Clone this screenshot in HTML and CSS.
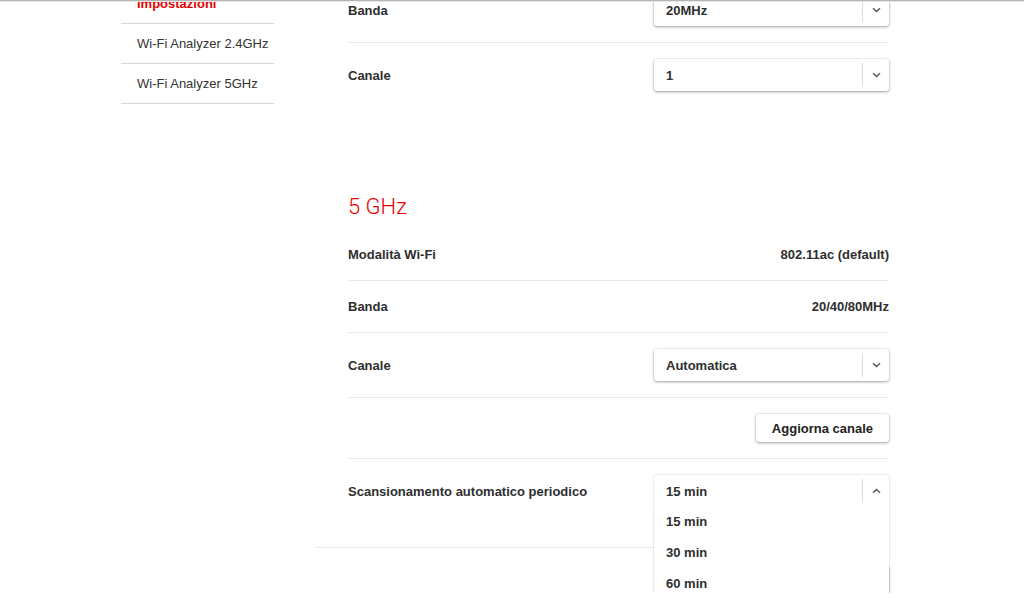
FILE: index.html
```html
<!DOCTYPE html>
<html lang="it">
<head>
<meta charset="utf-8">
<title>Wi-Fi</title>
<link rel="stylesheet" href="styles.css">
</head>
<body>
<div class="topbar"></div>
<div class="page">
  <nav class="sidebar">
    <a class="side-item active">Impostazioni</a>
    <a class="side-item">Wi-Fi Analyzer 2.4GHz</a>
    <a class="side-item">Wi-Fi Analyzer 5GHz</a>
  </nav>
  <main class="main">
    <section class="section">
      <div class="row row-ctl">
        <span class="label">Banda</span>
        <div class="select"><span class="sel-val">20MHz</span><span class="sel-arrow"><svg width="9" height="6" viewBox="0 0 9 6"><path d="M1 1.2l3.5 3.4L8 1.2" fill="none" stroke="#555" stroke-width="1.4"/></svg></span></div>
      </div>
      <div class="row row-ctl last">
        <span class="label">Canale</span>
        <div class="select"><span class="sel-val">1</span><span class="sel-arrow"><svg width="9" height="6" viewBox="0 0 9 6"><path d="M1 1.2l3.5 3.4L8 1.2" fill="none" stroke="#555" stroke-width="1.4"/></svg></span></div>
      </div>
    </section>
    <section class="section s5">
      <h2 class="heading">5 GHz</h2>
      <div class="row row-text">
        <span class="label">Modalità Wi-Fi</span>
        <span class="value">802.11ac (default)</span>
      </div>
      <div class="row row-text">
        <span class="label">Banda</span>
        <span class="value">20/40/80MHz</span>
      </div>
      <div class="row row-ctl">
        <span class="label">Canale</span>
        <div class="select"><span class="sel-val">Automatica</span><span class="sel-arrow"><svg width="9" height="6" viewBox="0 0 9 6"><path d="M1 1.2l3.5 3.4L8 1.2" fill="none" stroke="#555" stroke-width="1.4"/></svg></span></div>
      </div>
      <div class="row row-btn">
        <button class="btn">Aggiorna canale</button>
      </div>
      <div class="row row-ctl last">
        <span class="label">Scansionamento automatico periodico</span>
        <div class="select open"><span class="sel-val">15 min</span><span class="sel-arrow"><svg width="9" height="6" viewBox="0 0 9 6"><path d="M1 4.8l3.5-3.4L8 4.8" fill="none" stroke="#555" stroke-width="1.4"/></svg></span>
          <ul class="menu">
            <li>15 min</li>
            <li>30 min</li>
            <li>60 min</li>
          </ul>
        </div>
      </div>
    </section>
    <div class="footer">
      <button class="btn">Salva</button>
    </div>
  </main>
</div>
</body>
</html>
```
FILE: styles.css
```css
* { box-sizing: border-box; }
html, body { margin: 0; padding: 0; background: #fff; overflow: hidden; }
body {
  font-family: "Liberation Sans", Arial, Helvetica, sans-serif;
  font-size: 13px;
  color: #333;
}
.topbar {
  position: fixed;
  top: 0; left: 0; right: 0;
  height: 2px;
  background: #b4b4b4;
  border-bottom: 1px solid #e8e8e8;
  z-index: 10;
}
.page {
  display: flex;
  gap: 74px;
  padding-left: 121px;
  margin-top: -22px;
}
.sidebar {
  width: 153px;
  flex: none;
  display: flex;
  flex-direction: column;
  margin-top: 6px;
}
.side-item {
  display: block;
  height: 40px;
  line-height: 39px;
  padding-left: 16px;
  border-bottom: 1px solid #d8d8d8;
  color: #333;
  font-size: 13px;
}
.side-item.active { color: #e60000; font-weight: bold; }
.main {
  width: 541px;
  flex: none;
}
.row {
  display: flex;
  align-items: center;
  justify-content: space-between;
  border-bottom: 1px solid #e8e8e8;
}
.row.last { border-bottom: none; }
.row-ctl { height: 65px; padding: 16px 0 16px; }
.row-ctl.last { height: 64px; }
.row-text { height: 52px; }
.row-btn { height: 61px; justify-content: flex-end; }
.label, .value { font-weight: bold; line-height: 19px; color: #2e2e2e; }
.s5 { margin-top: 86px; }
.heading {
  margin: 0 0 8px;
  font-family: Roboto, "Liberation Sans", sans-serif;
  font-weight: 300;
  font-size: 22px;
  line-height: 28px;
  color: #e60000;
}
.select {
  position: relative;
  width: 235px;
  height: 32px;
  display: flex;
  align-items: center;
  background: #fff;
  border-radius: 3px;
  box-shadow: 0 1px 3px rgba(0,0,0,.35), 0 0 0 1px rgba(0,0,0,.04);
}
.sel-val { flex: 1; padding-left: 12px; font-weight: bold; color: #2e2e2e; }
.sel-arrow {
  width: 27px;
  height: 24px;
  border-left: 1px solid #dcdcdc;
  display: flex;
  align-items: center;
  justify-content: center;
}
.select.open {
  border-radius: 3px 3px 0 0;
  box-shadow: 0 0 2px rgba(0,0,0,.25);
  z-index: 5;
}
.menu {
  position: absolute;
  top: 32px;
  left: 0;
  width: 235px;
  margin: 0;
  padding: 0 0 30px;
  list-style: none;
  background: #fff;
  box-shadow: 0 1px 2px rgba(0,0,0,.25);
  clip-path: inset(0 -4px -4px -4px);
}
.menu li {
  height: 31px;
  line-height: 31px;
  padding-left: 12px;
  font-weight: bold;
  color: #2e2e2e;
}
.menu li:first-child { margin-top: -1px; }
.btn {
  font-family: inherit;
  font-size: 13px;
  font-weight: bold;
  color: #222;
  background: #fff;
  border: none;
  border-radius: 3px;
  height: 28px;
  padding: 0 16px;
  box-shadow: 0 1px 3px rgba(0,0,0,.35), 0 0 0 1px rgba(0,0,0,.04);
}
.footer {
  margin-top: 24px;
  margin-left: -32px;
  border-top: 1px solid #e8e8e8;
  padding-top: 17px;
  display: flex;
  justify-content: flex-end;
}
```
